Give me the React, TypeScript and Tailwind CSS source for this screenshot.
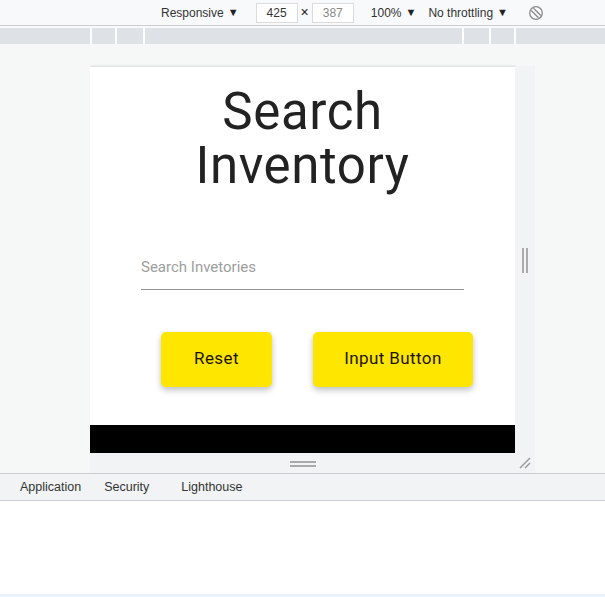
import { useState } from "react";

const TABS = ["Application", "Security", "Lighthouse"];

function RotateIcon() {
  return (
    <svg width="16" height="16" viewBox="0 0 16 16" fill="none" stroke="#8a8a8a" strokeWidth="1.3">
      <circle cx="8" cy="8" r="6.3" />
      <line x1="3.2" y1="5.5" x2="10.5" y2="12.8" />
      <line x1="5.5" y1="3.2" x2="12.8" y2="10.5" />
    </svg>
  );
}

export default function App() {
  const [query, setQuery] = useState("");

  return (
    <div className="flex flex-col w-[605px] h-[597px] overflow-hidden bg-white font-['Liberation_Sans',Arial,sans-serif] text-[12px] text-[#333]">
      {/* device toolbar */}
      <div className="h-[26px] shrink-0 bg-[#f8f9fa] border-b border-[#cbcdd1] flex items-center">
        <span className="ml-[161px] text-[#333]">Responsive</span>
        <span className="ml-[4px] text-[11px] text-[#222]">▼</span>
        <span className="ml-[17px] w-[42px] h-[20px] border border-[#dcdcdc] bg-white flex items-center justify-center">425</span>
        <span className="mx-[3px] text-[14px] text-[#222]">×</span>
        <span className="w-[42px] h-[20px] border border-[#dcdcdc] bg-white flex items-center justify-center text-[#888]">387</span>
        <span className="ml-[17px]">100%</span>
        <span className="ml-[4px] text-[11px] text-[#222]">▼</span>
        <span className="ml-[12px] text-[#333]">No throttling</span>
        <span className="ml-[4px] text-[11px] text-[#222]">▼</span>
        <span className="ml-[20px] flex items-center"><RotateIcon /></span>
      </div>

      {/* media query ruler */}
      <div className="h-[18px] shrink-0 bg-[#f8f9fa] pt-[2px]">
        <div className="h-[16px] bg-[#dee1e6] flex">
          <div className="w-[92px] border-r-2 border-white" />
          <div className="w-[25px] border-r-2 border-white" />
          <div className="w-[28px] border-r-2 border-white" />
          <div className="w-[319px] border-r-2 border-white" />
          <div className="w-[27px] border-r-2 border-white" />
          <div className="w-[25px] border-r-2 border-white" />
          <div className="flex-1" />
        </div>
      </div>

      {/* viewport area */}
      <div className="h-[429px] shrink-0 bg-[#f6f7f7] pt-[22px] pl-[90px]">
        <div className="w-[445px] grid grid-cols-[425px_20px] grid-rows-[387px_20px]">
          <div className="bg-white border-t border-[#e3e3e3] shadow-[1px_0_2px_rgba(0,0,0,0.12)] flex flex-col overflow-hidden font-['Roboto',sans-serif]">
            <h1 className="text-center text-[51px] leading-[54px] text-[#222] mt-[18px] tracking-[0.6px]">
              Search
              <br />
              Inventory
            </h1>
            <div className="mt-[63px] mx-[51px] border-b border-[#949494] pb-[10px]">
              <input
                value={query}
                onChange={(e) => setQuery(e.target.value)}
                placeholder="Search Invetories"
                className="w-full bg-transparent outline-none text-[15px] text-[#333] placeholder:text-[#9e9e9e]"
              />
            </div>
            <div className="mt-[42px] flex pl-[71px] gap-[41px]">
              <button className="w-[111px] h-[55px] rounded-[5px] bg-[#ffe600] text-[17px] text-[#1c1400] tracking-[0.4px] shadow-[0_3px_6px_rgba(0,0,0,0.25)]">
                Reset
              </button>
              <button className="w-[160px] h-[55px] rounded-[5px] bg-[#ffe600] text-[17px] text-[#1c1400] tracking-[0.4px] shadow-[0_3px_6px_rgba(0,0,0,0.25)]">
                Input Button
              </button>
            </div>
            <div className="mt-auto h-[28px] bg-black shrink-0" />
          </div>
          {/* right handle */}
          <div className="bg-[#f1f3f4] flex items-center justify-center gap-[2px] pt-[2px]">
            <div className="w-[2px] h-[25px] bg-[#aaa]" />
            <div className="w-[2px] h-[25px] bg-[#aaa]" />
          </div>
          {/* bottom handle */}
          <div className="bg-[#f1f3f4] flex flex-col items-center justify-center gap-[2px] pl-[1px] pt-[1px]">
            <div className="w-[26px] h-[2px] bg-[#aaa]" />
            <div className="w-[26px] h-[2px] bg-[#aaa]" />
          </div>
          <div className="bg-[#f1f3f4] flex items-center justify-center">
            <svg width="12" height="12" viewBox="0 0 12 12" stroke="#999" strokeWidth="1.5">
              <line x1="1" y1="11" x2="11" y2="1" />
              <line x1="6" y1="11" x2="11" y2="6" />
            </svg>
          </div>
        </div>
      </div>

      {/* devtools tabs */}
      <div className="h-[28px] shrink-0 bg-[#f1f3f4] border-y border-[#cacdd1] flex items-center text-[12.5px]">
        {TABS.map((t, i) => (
          <span key={t} className={i === 0 ? "ml-[20px]" : i === 1 ? "ml-[23px]" : "ml-[32px]"}>
            {t}
          </span>
        ))}
      </div>
      <div className="flex-1 bg-white" />
      <div className="h-[3px] shrink-0 bg-[#e8f0fe]" />
    </div>
  );
}
